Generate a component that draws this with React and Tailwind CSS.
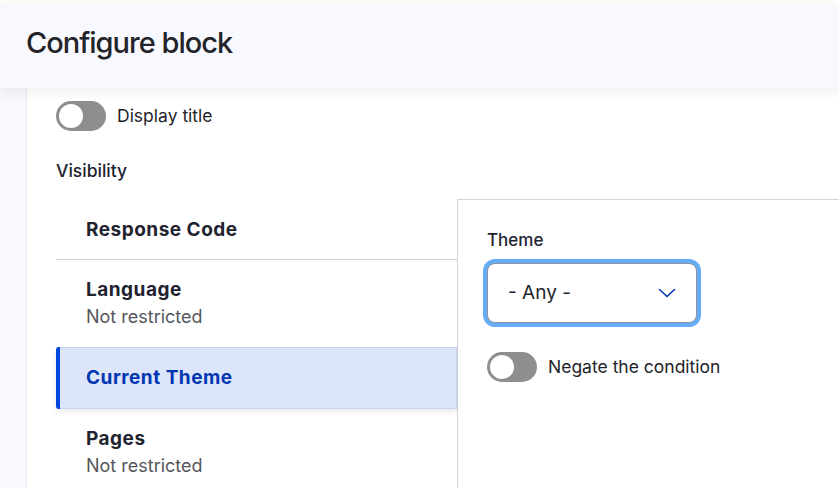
import React from 'react';

function Toggle() {
  return (
    <span className="flex h-[30px] w-[50px] shrink-0 items-center rounded-full bg-[#8e8e8e] px-[3px]">
      <span className="h-[24px] w-[24px] rounded-full bg-white" />
    </span>
  );
}

function Tab({ title, summary, active, divider }) {
  if (active) {
    return (
      <div className="relative z-10 flex h-[62px] items-center rounded-l-[3px] border border-l-0 border-[#c5d3ee] bg-[#dce5f9] pl-[30px] shadow-[0_3px_6px_rgba(0,0,0,0.08)]">
        <span className="absolute left-0 top-[-1px] bottom-[-1px] w-[4px] rounded-l-[3px] bg-[#0047de]" />
        <span className="text-[19px] font-bold leading-[26px] tracking-[0.5px] text-[#0036b1]">{title}</span>
      </div>
    );
  }
  return (
    <div className={divider ? 'border-b border-[#d3d4d9] pl-[30px] pt-[18px] pb-[16px]' : 'pl-[30px] py-[17px]'}>
      <div className="text-[19px] font-bold leading-[26px] tracking-[0.5px] text-[#222330]">{title}</div>
      {summary && <div className="text-[18px] leading-[27px] text-[#55565b]">{summary}</div>}
    </div>
  );
}

export default function App() {
  return (
    <div className="h-[488px] w-[839px] overflow-hidden bg-[#f8f9fe] font-['Inter',sans-serif] text-[#222330]">
      <div className="h-[5px] bg-white" />

      {/* Header */}
      <div className="relative z-20 flex h-[83px] items-center bg-[#f8f9fe] px-[26px] pb-[7px] shadow-[0_2px_14px_rgba(0,0,0,0.09)]">
        <h1 className="text-[29px] font-medium tracking-[-1px] text-[#232429]">Configure block</h1>
      </div>

      {/* Body */}
      <div className="flex pl-[26px]">
        <div className="flex-1 border-l border-[#e9eaf0] bg-white pl-[29px] pt-[13px]">
          {/* Display title */}
          <div className="flex items-center gap-[11px]">
            <Toggle />
            <span className="text-[17.5px] leading-[24px] text-[#232429]">Display title</span>
          </div>

          <div className="mt-[28px] text-[17.5px] font-medium leading-[24px]">Visibility</div>

          {/* Vertical tabs */}
          <div className="mt-[16px] flex">
            <div className="w-[401px] shrink-0">
              <Tab title="Response Code" divider />
              <Tab title="Language" summary="Not restricted" />
              <Tab title="Current Theme" active />
              <Tab title="Pages" summary="Not restricted" />
            </div>

            <div className="h-[300px] flex-1 border-l border-t border-[#d4d5db] bg-white pl-[29px] pt-[28px]">
              <div className="text-[17px] font-medium leading-[24px]">Theme</div>
              <div className="mt-[11px] flex h-[60px] w-[210px] items-center justify-between rounded-[8px] border border-[#8e929c] bg-white pl-[20px] pr-[20px] shadow-[0_0_0_4px_#65adf6]">
                <span className="text-[19px] leading-[28px] text-[#232429]">- Any -</span>
                <svg width="18" height="10" viewBox="0 0 18 10" fill="none">
                  <path d="M1.5 1.5 L9 8.5 L16.5 1.5" stroke="#0036b1" strokeWidth="1.6" strokeLinecap="round" strokeLinejoin="round" />
                </svg>
              </div>

              <div className="mt-[29px] flex items-center gap-[11px]">
                <Toggle />
                <span className="text-[17.5px] leading-[24px] text-[#232429]">Negate the condition</span>
              </div>
            </div>
          </div>
        </div>
      </div>
    </div>
  );
}
